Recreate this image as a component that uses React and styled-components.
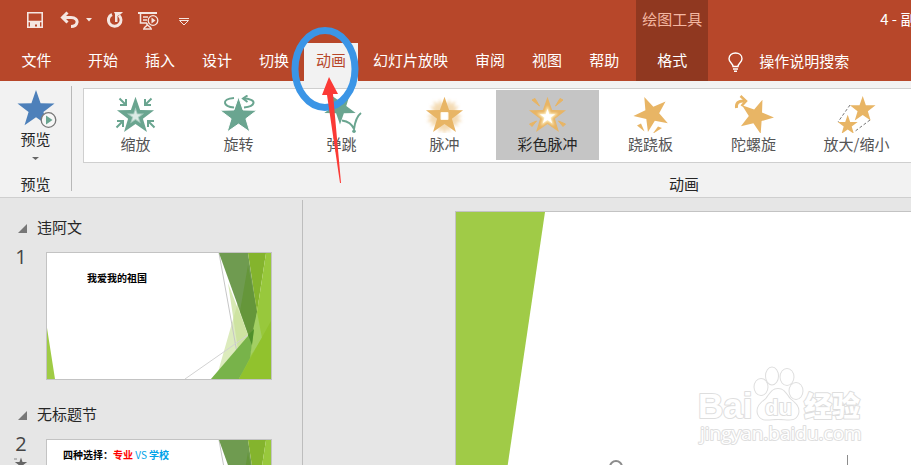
import React from 'react';
import styled, { createGlobalStyle } from 'styled-components';

const GlobalStyle = createGlobalStyle`
  *, *::before, *::after {
    box-sizing: border-box;
  }
  body {
    margin: 0;
    overflow: hidden;
    font-family: "Noto Sans CJK SC", sans-serif;
    font-size: 15px;
    line-height: 20px;
    color: #262626;
  }
  button, input {
    font: inherit;
    color: inherit;
    border: 0;
    padding: 0;
    background: none;
  }
  svg {
    display: block;
    flex: none;
  }
`;

const Window = styled.div`
  position: relative;
  display: flex;
  flex-direction: column;
  height: 100vh;
  overflow: hidden;
  background: #e6e6e6;
`;

// Title bar and tabs
const Header = styled.header`
  display: flex;
  background: #b7472a;
  color: #fff;
  white-space: nowrap;
`;

const HeaderColumn = styled.div`
  display: flex;
  flex-direction: column;
  flex: ${(props) => (props.$grow ? '1' : 'none')};
  min-width: 0;
  overflow: hidden;
  background: ${(props) => (props.$context ? '#903820' : 'transparent')};
  padding-right: ${(props) => (props.$padEnd ? '5px' : '0')};
`;

const TitleRow = styled.div`
  display: flex;
  align-items: center;
  height: 43px;
  padding-bottom: 6px;
`;

const QuickAccess = styled(TitleRow)`
  gap: 15px;
  padding-left: 26px;
  padding-bottom: 3px;
`;

const QuickButton = styled.button`
  display: flex;
  align-items: center;
  gap: 7px;
`;

const ContextLabel = styled(TitleRow)`
  justify-content: center;
  padding-left: 6px;
  padding-right: 6px;
  color: #f4b7a2;
`;

const DocumentTitle = styled(TitleRow)`
  padding-left: 172px;
`;

const Tabs = styled.nav`
  display: flex;
  gap: 3px;
`;

const Tab = styled.button`
  height: 38px;
  padding: 0 12px 4px;
  min-width: ${(props) => (props.$file ? '73px' : '0')};
  background: ${(props) => (props.$active ? '#f2f2f2' : 'transparent')};
  color: ${(props) => (props.$active ? '#b7472a' : '#fff')};
`;

const Search = styled.label`
  display: flex;
  align-items: center;
  gap: 16px;
  height: 38px;
  padding-left: 20px;
`;

const SearchInput = styled.input`
  width: 120px;
  padding-bottom: 2px;
  outline: none;
  &::placeholder {
    color: #fff;
    opacity: 1;
  }
`;

// Ribbon
const Ribbon = styled.section`
  display: flex;
  flex: none;
  overflow: hidden;
  padding: 5px 0 6px;
  background: #f2f2f2;
  border-bottom: 1px solid #cfcfcf;
`;

const PreviewGroup = styled.div`
  display: flex;
  flex-direction: column;
  align-items: center;
  justify-content: space-between;
  flex: none;
  width: 72px;
  height: 105px;
  border-right: 1px solid #b8b8b8;
`;

const PreviewButton = styled.button`
  display: flex;
  flex-direction: column;
  align-items: center;
  gap: 1px;
  padding-top: 2px;
`;

const GroupLabel = styled.div`
  text-align: center;
  line-height: 14px;
`;

// The group is wider than a small window and runs past its right edge
const AnimationGroup = styled.div`
  display: flex;
  flex-direction: column;
  justify-content: space-between;
  flex: 1 0 1202px;
  margin-left: 11px;
  padding-top: 2px;
`;

const Gallery = styled.div`
  display: flex;
  padding: 1px 0 2px;
  background: #fff;
  border: 1px solid #cfcfcf;
`;

const Effect = styled.button`
  display: flex;
  flex-direction: column;
  align-items: center;
  gap: 1px;
  width: 103px;
  height: 70px;
  padding-top: 5px;
  color: ${(props) => (props.$active ? '#262626' : '#555')};
  background: ${(props) => (props.$active ? '#c5c5c5' : 'transparent')};
`;

// Work area
const Workspace = styled.main`
  display: flex;
  flex: 1;
  min-height: 0;
  padding-top: 2px;
`;

const SlideList = styled.aside`
  flex: none;
  width: 303px;
  padding-top: 16px;
  overflow: hidden;
  border-right: 1px solid #bdbdbd;
`;

const SectionTitle = styled.h2`
  display: flex;
  align-items: center;
  gap: 10px;
  margin: 0 0 15px;
  padding-left: 18px;
  font-size: 15px;
  font-weight: 400;
  line-height: 21px;
`;

const SlideRow = styled.div`
  display: flex;
  margin-bottom: 23px;
`;

const SlideNumber = styled.div`
  display: flex;
  flex-direction: column;
  align-items: center;
  width: 46px;
  padding-right: 4px;
  margin-top: -6px;
  gap: 2px;
  font-family: "Open Sans", sans-serif;
  font-size: 20px;
  line-height: 22px;
  color: #444;
`;

const Thumbnail = styled.button`
  display: grid;
  width: 226px;
  height: 128px;
  background: #fff;
  border: 1px solid #c3c3c3;
  text-align: left;
  & > * {
    grid-area: 1 / 1;
  }
`;

const ThumbnailText = styled.div`
  align-self: start;
  padding: ${(props) => (props.$wide ? '9px 0 0 16px' : '19px 0 0 40px')};
  font-size: 10px;
  font-weight: 700;
  line-height: 12px;
  color: #000;
  white-space: pre;
`;

const Accent = styled.span`
  color: ${(props) => props.$color};
  font-weight: ${(props) => (props.$plain ? '400' : '700')};
`;

const Canvas = styled.section`
  display: flex;
  flex: 1;
  min-width: 0;
  padding: 11px 0 0 152px;
`;

const Slide = styled.div`
  position: relative;
  flex: 1;
  overflow: hidden;
  background: #fff;
  border: 1px solid #c3c3c3;
  border-width: 1px 0 0 1px;
`;

const RotateHandle = styled.div`
  position: absolute;
  left: 153px;
  bottom: -9px;
  width: 14px;
  height: 14px;
  border: 2px solid #8c8c8c;
  border-radius: 50%;
`;

const TextBoxEdge = styled.div`
  position: absolute;
  right: 63px;
  bottom: 0;
  height: 10px;
  border-right: 1px solid #8c8c8c;
`;

const Watermark = styled.svg`
  position: absolute;
  right: 41px;
  bottom: 12px;
`;

const Annotation = styled.svg`
  position: absolute;
  top: 24px;
  left: 288px;
  pointer-events: none;
`;

const GREEN = '#6aa590';
const GOLD = '#e8b565';

const starPoints = (cx, cy, r, turn = 0) =>
  Array.from({ length: 10 }, (_, i) => {
    const radius = i % 2 ? r * 0.4 : r;
    const angle = ((i * 36 + turn - 90) * Math.PI) / 180;
    return `${(cx + radius * Math.cos(angle)).toFixed(2)},${(cy + radius * Math.sin(angle)).toFixed(2)}`;
  }).join(' ');

const Star = ({ x, y, r, turn, ...rest }) => <polygon points={starPoints(x, y, r, turn)} {...rest} />;

const ZoomArt = () => (
  <>
    <Star x={20.5} y={21.3} r={19.5} fill={GREEN} />
    <Star x={20.5} y={21.3} r={9} fill="#a9cdc0" />
    <Star x={20.5} y={21.3} r={6} fill="#dcebe5" />
    {[[4, 3, 1, 1], [37, 3, -1, 1], [1, 33, 1, -1], [40, 33, -1, -1]].map(([x, y, sx, sy]) => (
      <path
        key={`${x}-${y}`}
        transform={`translate(${x} ${y}) scale(${sx} ${sy})`}
        d="M0.500 0.500L6.500 6.500M7 1V7H1"
        fill="none"
        stroke={GREEN}
        strokeWidth="2"
      />
    ))}
  </>
);

const SpinArt = () => (
  <>
    <path d="M16 3C9 3.500 6.500 5.500 7 8C7.500 10.500 11 12 16 12.500" fill="none" stroke={GREEN} strokeWidth="2" />
    <path d="M25 3.500C32 3.500 36 5.500 35.500 8C35 10.500 31 12 26 12.500" fill="none" stroke={GREEN} strokeWidth="2" />
    <path d="M29.500 0.500L25 3.500L29.500 7" fill="none" stroke={GREEN} strokeWidth="2" />
    <Star x={20.5} y={21.3} r={19.5} fill={GREEN} stroke="#fff" strokeWidth="1" />
  </>
);

const BounceArt = () => (
  <>
    <Star x={19} y={13} r={16.5} turn={180} fill={GREEN} />
    <path d="M21 26C28 26 32 29 33 34C34 26 36 21 40 18" fill="none" stroke="#fff" strokeWidth="4" />
    <path d="M21 25.500C28 26.500 31 29 33 34C34 27 36 21 40 18" fill="none" stroke={GREEN} strokeWidth="2" />
    <circle cx="33" cy="36.200" r="1.800" fill={GREEN} />
  </>
);

const PulseArt = () => (
  <>
    <defs>
      <filter id="soft" x="-30%" y="-30%" width="160%" height="160%">
        <feGaussianBlur stdDeviation="1.5" />
      </filter>
    </defs>
    <g filter="url(#soft)" fill={GOLD} opacity="0.5">
      <Star x={20.5} y={21} r={19} turn={36} />
      <Star x={20.5} y={21} r={18} turn={18} />
      <Star x={20.5} y={21} r={18} turn={54} />
    </g>
    <Star x={20.5} y={21.3} r={19.5} fill={GOLD} />
    <rect x="16.500" y="17" width="8" height="8" rx="1" fill="#fff6e6" />
    <rect x="17.500" y="18" width="6" height="6" fill="#fff" />
  </>
);

const ColorPulseArt = () => (
  <>
    <defs>
      <filter id="glow" x="-40%" y="-40%" width="180%" height="180%">
        <feGaussianBlur stdDeviation="1.2" />
      </filter>
    </defs>
    <Star x={20.5} y={21.3} r={19.5} fill={GOLD} />
    <Star x={20.5} y={21.8} r={11} fill="#fff3c8" filter="url(#glow)" />
    <Star x={20.5} y={21.8} r={8} fill="#fff" />
    <path
      d="M5 5L8 3.500L12.500 11ZM36 5L33 3.500L28.500 11ZM2.500 29L9.500 26L5 31.500ZM38.500 29L31.500 26L36 31.500Z"
      fill={GOLD}
      stroke={GOLD}
      strokeWidth="1"
    />
  </>
);

const TeeterArt = () => (
  <>
    <Star x={21.8} y={19} r={18.5} turn={-24} fill={GOLD} />
    <path d="M7 30.500L11 28.500L14.500 36.500ZM28 31.500L32 33L22.500 39Z" fill={GOLD} />
  </>
);

const GyroArt = () => (
  <>
    <Star x={23} y={21.5} r={18} turn={21} fill={GOLD} />
    <path d="M3.500 13C3 8 5 6 11 6" fill="none" stroke={GOLD} strokeWidth="3" />
    <path d="M7.500 1L13 6L8.500 11" fill="none" stroke={GOLD} strokeWidth="2.500" />
  </>
);

const GrowArt = () => (
  <>
    <Star x={26.7} y={14.5} r={13.5} fill={GOLD} />
    <Star x={11.7} y={30.3} r={10.5} fill={GOLD} />
    <path d="M14 10L2 27M34 25L18 37" fill="none" stroke="#777" strokeWidth="1" strokeDasharray="3 2" />
  </>
);

const effects = [
  { label: '缩放', Art: ZoomArt },
  { label: '旋转', Art: SpinArt },
  { label: '弹跳', Art: BounceArt },
  { label: '脉冲', Art: PulseArt },
  { label: '彩色脉冲', Art: ColorPulseArt, active: true },
  { label: '跷跷板', Art: TeeterArt },
  { label: '陀螺旋', Art: GyroArt },
  { label: '放大/缩小', Art: GrowArt },
];

const tabs = ['文件', '开始', '插入', '设计', '切换', '动画', '幻灯片放映', '审阅', '视图', '帮助'];

const SlideArt = () => (
  <svg width="224" height="126" viewBox="0 0 224 126">
    <path d="M201 14L171 119L164 126H215V60Z" fill="#dcebbd" />
    <path d="M181 30L201 82L193 122L190 90Z" fill="#c8df96" opacity="0.700" />
    <path d="M172 0L194 122" stroke="#c6c6c6" />
    <path d="M172 0H201L210 59L205 92Z" fill="#6f9b50" />
    <path d="M201 12L210 59L205 92L193 58Z" fill="#65963a" />
    <path d="M201 0H219L210 59Z" fill="#84b42d" />
    <path d="M219 0H224V126H192L205 96L210 59Z" fill="#98c83c" />
    <path d="M210 59L215 85L203 104L206 77Z" fill="#a3cf63" />
    <path d="M164 126L207 76L203 105L192 126Z" fill="#78b34a" />
    <path d="M201 82L207 76L205 92Z" fill="#4f8f2b" />
    <path d="M192 126L224 68V126Z" fill="#91c22d" />
    <path d="M138 126L201 82" stroke="#d2d2d2" />
    <path d="M0 75L8 126H0Z" fill="#9fcb45" />
  </svg>
);

const SectionArrow = () => (
  <svg width="9" height="12" viewBox="0 0 9 12">
    <path d="M9 3V12H0Z" fill="#777" />
  </svg>
);

const App = () => {
  return (
    <Window>
      <GlobalStyle />
      <Header>
        <HeaderColumn $padEnd>
          <QuickAccess>
            <QuickButton aria-label="保存">
              <svg width="18" height="18" viewBox="0 0 18 18" fill="none" stroke="#f5e6e1">
                <path d="M1.800 1.800H16.200V16.200H1.800Z" strokeWidth="1.600" />
                <path d="M2 10.500H16" strokeWidth="1.500" />
                <path d="M4 11H14V16H11V13.500H9V16H4Z" fill="#f5e6e1" stroke="none" />
              </svg>
            </QuickButton>
            <QuickButton aria-label="撤消">
              <svg width="20" height="18" viewBox="0 0 20 18" fill="none" stroke="#f5e6e1">
                <path d="M8.500 1.500L3.500 6.500L8.500 11.500" strokeWidth="3" />
                <path d="M3 6.500H12C16.500 6.500 18.500 9 18 11.500C17.500 14 15.500 15.500 12 15.500" strokeWidth="3" />
              </svg>
              <svg width="6" height="4" viewBox="0 0 6 4">
                <path d="M0 0H6L3 3.500Z" fill="#f5e6e1" />
              </svg>
            </QuickButton>
            <QuickButton aria-label="重复">
              <svg width="16" height="18" viewBox="2 0 16 18" fill="none" stroke="#f5e6e1">
                <path d="M7 3.500C3.500 5 2.500 9 4.500 12.500C7 16 12 16 14.500 13C16.500 10.500 16.500 7 14 4.500" strokeWidth="3" />
                <path d="M9 1H18L16 3L12.500 5V11H10V3Z" fill="#f5e6e1" stroke="none" />
              </svg>
            </QuickButton>
            <QuickButton aria-label="从头开始">
              <svg width="21" height="19" viewBox="0 0 21 19" fill="none" stroke="#f5e6e1">
                <path d="M0 2H19" strokeWidth="2" />
                <path d="M2.500 2V12H9M5 6H10M5 9H9M9 15V12M5 18H14M6 17L9.500 14L13 17" strokeWidth="1.500" />
                <circle cx="15" cy="9.500" r="4.800" strokeWidth="1.300" />
                <path d="M13.500 6.500V12.500L17.500 9.500Z" fill="#f5e6e1" stroke="none" />
              </svg>
            </QuickButton>
            <QuickButton aria-label="自定义快速访问工具栏">
              <svg width="16" height="12" viewBox="0 0 16 12" fill="none" stroke="#f5e6e1">
                <path d="M5 4.500H15M5.500 6.500H14.500L10 11Z" />
              </svg>
            </QuickButton>
          </QuickAccess>
          <Tabs>
            {tabs.map((name, index) => (
              <Tab key={name} $file={index === 0} $active={name === '动画'}>
                {name}
              </Tab>
            ))}
          </Tabs>
        </HeaderColumn>
        <HeaderColumn $context>
          <ContextLabel>绘图工具</ContextLabel>
          <Tab>格式</Tab>
        </HeaderColumn>
        <HeaderColumn $grow>
          <DocumentTitle>4 - 副</DocumentTitle>
          <Search>
            <svg width="15" height="20" viewBox="0 0 15 20" fill="none" stroke="#fff" strokeWidth="1.400">
              <path d="M5 14.500C5 11.500 1 10.500 1 6.800C1 3.200 4 1 7.500 1C11 1 14 3.200 14 6.800C14 10.500 10 11.500 10 14.500Z" />
              <path d="M5 17H10M6 19.200H9" />
            </svg>
            <SearchInput type="text" aria-label="操作说明搜索" placeholder="操作说明搜索" />
          </Search>
        </HeaderColumn>
      </Header>

      <Ribbon>
        <PreviewGroup>
          <PreviewButton>
            <svg width="42" height="40" viewBox="0 0 42 40">
              <Star x={21} y={21.5} r={19.5} fill="#4d80ba" />
              <circle cx="33.500" cy="32" r="7.300" fill="#f7f7f7" stroke="#777" strokeWidth="1.300" />
              <path d="M31 27.500V36.500L37.500 32Z" fill={GREEN} />
            </svg>
            <span>预览</span>
            <svg width="7" height="10" viewBox="0 0 7 10">
              <path d="M0 7H7L3.500 10Z" fill="#666" />
            </svg>
          </PreviewButton>
          <GroupLabel>预览</GroupLabel>
        </PreviewGroup>
        <AnimationGroup>
          <Gallery>
            {effects.map(({ label, Art, active }) => (
              <Effect key={label} $active={active}>
                <svg width="41" height="38" viewBox="0 0 41 38">
                  <Art />
                </svg>
                {label}
              </Effect>
            ))}
          </Gallery>
          <GroupLabel>动画</GroupLabel>
        </AnimationGroup>
      </Ribbon>

      <Workspace>
        <SlideList>
          <SectionTitle>
            <SectionArrow />
            违阿文
          </SectionTitle>
          <SlideRow>
            <SlideNumber>1</SlideNumber>
            <Thumbnail>
              <SlideArt />
              <ThumbnailText>我爱我的祖国</ThumbnailText>
            </Thumbnail>
          </SlideRow>
          <SectionTitle>
            <SectionArrow />
            无标题节
          </SectionTitle>
          <SlideRow>
            <SlideNumber>
              2
              <svg width="14" height="13" viewBox="0 0 14 13">
                <Star x={7} y={7} r={6.5} fill="#666" />
                <path d="M0 2H3" stroke="#888" />
              </svg>
            </SlideNumber>
            <Thumbnail>
              <SlideArt />
              <ThumbnailText $wide>
                四种选择：<Accent $color="#f00">专业</Accent>
                <Accent $color="#00a2e8" $plain> VS </Accent>
                <Accent $color="#00a2e8">学校</Accent>
              </ThumbnailText>
            </Thumbnail>
          </SlideRow>
        </SlideList>
        <Canvas>
          <Slide>
            <svg width="89" height="604" viewBox="0 0 89 604">
              <path d="M0 0H89L0 604Z" fill="#a0cb47" />
            </svg>
            <RotateHandle />
            <TextBoxEdge />
            <Watermark
              width="176"
              height="88"
              viewBox="0 0 176 88"
              fill="#fff"
              stroke="#dedede"
              strokeWidth="2"
              strokeLinejoin="round"
              paintOrder="stroke"
            >
              <g fontFamily="Liberation Sans, Noto Sans CJK SC, sans-serif" fontWeight="700">
                <text x="4" y="53" fontSize="35">Bai</text>
                <path d="M84 24C90 24 92 29 96 34C101 38 106 42 104 49C101 57 94 54 84 54C75 54 67 57 64 49C62 42 67 38 72 34C76 29 78 24 84 24Z" />
                <ellipse cx="67" cy="22" rx="6.500" ry="8" />
                <ellipse cx="78" cy="11" rx="6" ry="8.500" />
                <ellipse cx="93" cy="12" rx="6.500" ry="8" />
                <ellipse cx="102" cy="26" rx="6.500" ry="8" />
                <text x="71" y="50" fontSize="22">du</text>
                <text x="110" y="52" fontSize="28" fontWeight="900">经验</text>
              </g>
              <text x="6" y="75" fontSize="19" fontFamily="Open Sans, sans-serif">jingyan.baidu.com</text>
            </Watermark>
          </Slide>
        </Canvas>
      </Workspace>

      <Annotation width="76" height="164" viewBox="0 0 76 164">
        <ellipse cx="37" cy="45" rx="30" ry="38.500" fill="none" stroke="#3b95e6" strokeWidth="7" />
        <path d="M41 53L50 70L45 70L53 159H52L39 71L34 71Z" fill="#fb3a36" />
      </Annotation>
    </Window>
  );
};

export default App;
